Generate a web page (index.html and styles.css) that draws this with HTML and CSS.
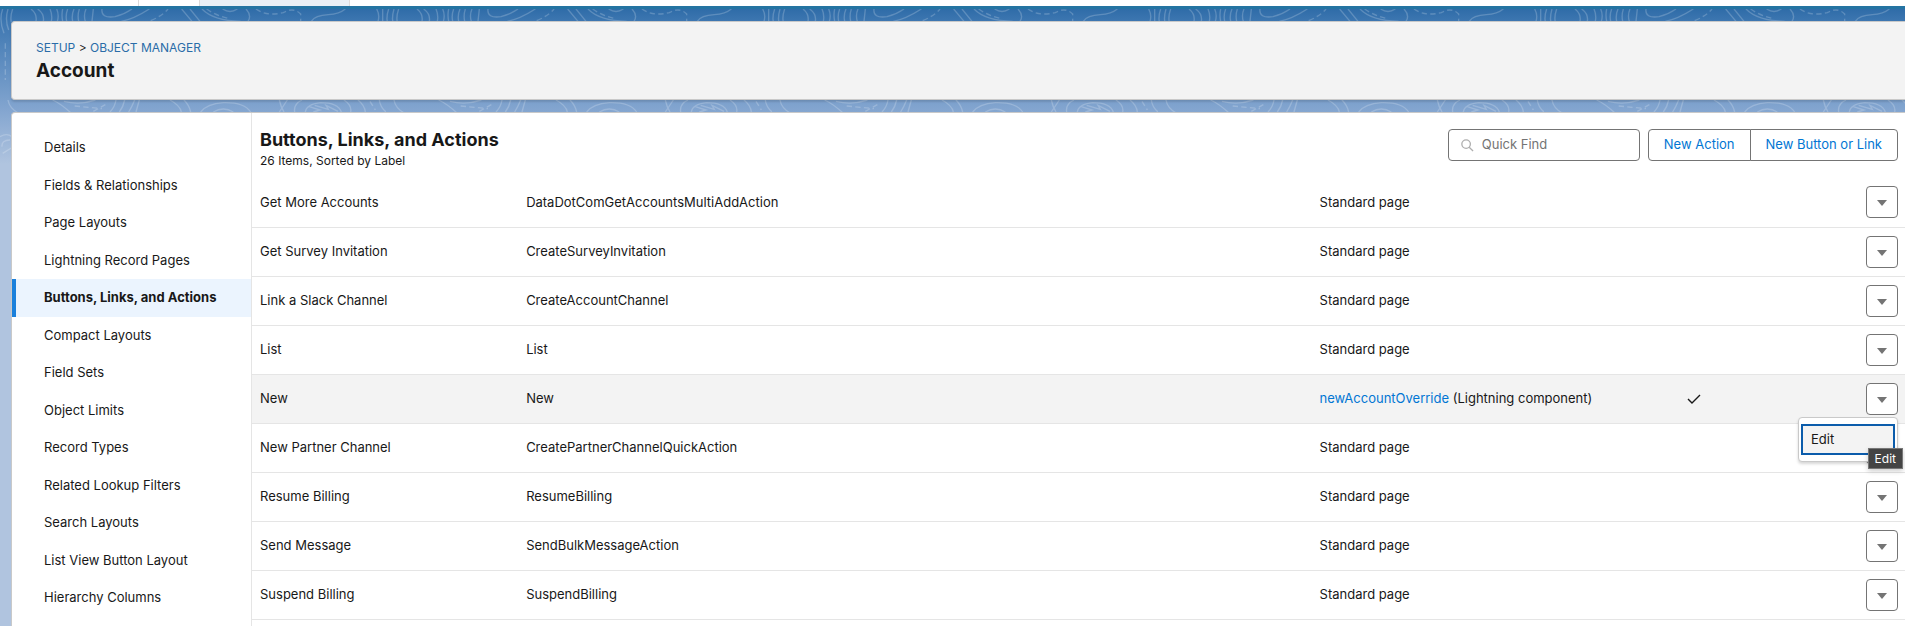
FILE: index.html
```html
<!DOCTYPE html>
<html lang="en">
<head>
  <meta charset="UTF-8" />
  <meta name="viewport" content="width=device-width, initial-scale=1.0"/>
  <title>Account | Object Manager</title>
  <link rel="stylesheet" href="styles.css">
</head>
<body>

  <!-- Tab bar -->
  <div class="tab-bar">
    <div class="tab-start"></div>
    <div class="tab-active"></div>
  </div>

  <div class="page">
    <header class="page-header">
      <div class="breadcrumb"><a href="#">SETUP</a> &gt; <a href="#">OBJECT MANAGER</a></div>
      <h1>Account</h1>
    </header>

    <div class="panel">
      <!-- Side menu -->
      <nav class="side-nav">
        <a href="#">Details</a>
        <a href="#">Fields &amp; Relationships</a>
        <a href="#">Page Layouts</a>
        <a href="#">Lightning Record Pages</a>
        <a href="#" class="active">Buttons, Links, and Actions</a>
        <a href="#">Compact Layouts</a>
        <a href="#">Field Sets</a>
        <a href="#">Object Limits</a>
        <a href="#">Record Types</a>
        <a href="#">Related Lookup Filters</a>
        <a href="#">Search Layouts</a>
        <a href="#">List View Button Layout</a>
        <a href="#">Hierarchy Columns</a>
      </nav>

      <main class="content">
        <div class="content-header">
          <div class="heading">
            <h2>Buttons, Links, and Actions</h2>
            <p>26 Items, Sorted by Label</p>
          </div>
          <div class="tools">
            <label class="search">
              <svg class="search-icon" viewBox="0 0 14 14"><circle cx="5.5" cy="5.5" r="4.6"/><path d="M8.8 8.8L13 13"/></svg>
              <input type="search" placeholder="Quick Find" aria-label="Quick Find">
            </label>
            <div class="btn-group">
              <button type="button" class="btn">New Action</button>
              <button type="button" class="btn">New Button or Link</button>
            </div>
          </div>
        </div>

        <table class="actions-table">
          <colgroup>
            <col class="col-label">
            <col class="col-name">
            <col class="col-content">
            <col class="col-check">
            <col class="col-menu">
          </colgroup>
          <tbody>
            <tr>
              <td>Get More Accounts</td>
              <td>DataDotComGetAccountsMultiAddAction</td>
              <td>Standard page</td>
              <td></td>
              <td><button type="button" class="menu-btn" aria-label="Show actions"><svg viewBox="0 0 10 6"><path d="M0 0H10L5 6Z"/></svg></button></td>
            </tr>
            <tr>
              <td>Get Survey Invitation</td>
              <td>CreateSurveyInvitation</td>
              <td>Standard page</td>
              <td></td>
              <td><button type="button" class="menu-btn" aria-label="Show actions"><svg viewBox="0 0 10 6"><path d="M0 0H10L5 6Z"/></svg></button></td>
            </tr>
            <tr>
              <td>Link a Slack Channel</td>
              <td>CreateAccountChannel</td>
              <td>Standard page</td>
              <td></td>
              <td><button type="button" class="menu-btn" aria-label="Show actions"><svg viewBox="0 0 10 6"><path d="M0 0H10L5 6Z"/></svg></button></td>
            </tr>
            <tr>
              <td>List</td>
              <td>List</td>
              <td>Standard page</td>
              <td></td>
              <td><button type="button" class="menu-btn" aria-label="Show actions"><svg viewBox="0 0 10 6"><path d="M0 0H10L5 6Z"/></svg></button></td>
            </tr>
            <tr class="current">
              <td>New</td>
              <td>New</td>
              <td><a href="#">newAccountOverride</a> (Lightning component)</td>
              <td><svg class="check" viewBox="0 0 14 10"><path d="M1 5L5 9L13 1"/></svg></td>
              <td>
                <div class="menu-wrap">
                  <button type="button" class="menu-btn" aria-label="Show actions"><svg viewBox="0 0 10 6"><path d="M0 0H10L5 6Z"/></svg></button>
                  <div class="dropdown">
                    <a href="#">Edit</a>
                    <span class="tooltip">Edit</span>
                  </div>
                </div>
              </td>
            </tr>
            <tr>
              <td>New Partner Channel</td>
              <td>CreatePartnerChannelQuickAction</td>
              <td>Standard page</td>
              <td></td>
              <td><button type="button" class="menu-btn" aria-label="Show actions"><svg viewBox="0 0 10 6"><path d="M0 0H10L5 6Z"/></svg></button></td>
            </tr>
            <tr>
              <td>Resume Billing</td>
              <td>ResumeBilling</td>
              <td>Standard page</td>
              <td></td>
              <td><button type="button" class="menu-btn" aria-label="Show actions"><svg viewBox="0 0 10 6"><path d="M0 0H10L5 6Z"/></svg></button></td>
            </tr>
            <tr>
              <td>Send Message</td>
              <td>SendBulkMessageAction</td>
              <td>Standard page</td>
              <td></td>
              <td><button type="button" class="menu-btn" aria-label="Show actions"><svg viewBox="0 0 10 6"><path d="M0 0H10L5 6Z"/></svg></button></td>
            </tr>
            <tr>
              <td>Suspend Billing</td>
              <td>SuspendBilling</td>
              <td>Standard page</td>
              <td></td>
              <td><button type="button" class="menu-btn" aria-label="Show actions"><svg viewBox="0 0 10 6"><path d="M0 0H10L5 6Z"/></svg></button></td>
            </tr>
          </tbody>
        </table>
      </main>
    </div>
  </div>

</body>
</html>
```
FILE: styles.css
```css
* {
  box-sizing: border-box;
}
body {
  margin: 0;
  height: 100vh;
  overflow: hidden;
  display: flex;
  flex-direction: column;
  font-family: Inter, "Liberation Sans", sans-serif;
  font-size: 13px;
  line-height: 1.5;
  color: #181818;
  background-color: #b0c4df;
}
a {
  color: #0176d3;
  text-decoration: none;
}
h1, h2, p {
  margin: 0;
}

/* Tab bar */
.tab-bar {
  display: flex;
  flex: none;
  height: 9px;
  background-color: #fff;
  border-bottom: 3px solid #2474a2;
}
.tab-start {
  width: 139px;
  margin-right: 60px;
  border-right: 1px solid #dddbda;
}
.tab-active {
  width: 151px;
  background-color: #e9f0f5;
  border-left: 1px solid #dddbda;
  border-right: 1px solid #dddbda;
}

/* Contour lines over the blue gradient */
.page {
  flex: 1;
  min-height: 0;
  display: flex;
  flex-direction: column;
  gap: 12px;
  padding: 12px 0 0 11px;
  background-image:
    url("data:image/svg+xml,%3Csvg xmlns='http://www.w3.org/2000/svg' width='386' height='151' viewBox='0 27 1158 453' fill='none' stroke='%23fff' stroke-opacity='.2' stroke-width='4'%3E%3Cpath d='M8 27Q-4 60 12 100M24 27Q14 60 26 90M38 27Q30 50 34 66M93 27Q112 42 108 64M113 27Q134 42 130 64M150 27Q158 45 154 64M170 27Q178 45 172 64M188 27Q184 45 188 64M203 27Q196 45 200 64M222 27Q214 45 218 64M238 27Q232 45 236 64M258 27Q250 45 256 64M280 27L276 64M306 27Q302 56 345 50Q372 44 396 27M364 64Q400 58 448 27M545 27L576 64M570 27L600 64M606 27Q640 62 722 64M668 27Q690 42 712 27M738 27Q756 46 744 64M934 64Q945 46 985 44Q1018 42 1036 27M1130 27Q1140 45 1134 64M1148 27V64'/%3E%3Cpath stroke-dasharray='16 10' d='M452 62Q490 46 504 27M620 27Q650 48 690 56M768 27Q800 50 850 38Q880 20 902 42V64M16 130V240'/%3E%3Cpath d='M24 300Q28 325 56 340M158 300Q184 312 214 340M192 304Q240 316 286 300M330 336Q345 320 348 300M358 336Q370 320 374 300M386 336Q396 320 404 300M408 336L418 300M510 300Q540 316 544 336M552 300Q568 316 572 336M602 336Q620 312 670 308Q732 306 752 336M640 336Q670 318 700 336M838 300Q842 320 852 336M862 300L838 336M884 336Q880 312 906 300M1032 300Q1056 316 1052 336M916 336Q920 312 962 308Q1014 308 1024 336M928 320L960 330L940 336M944 316L985 328L978 316L1014 334M1074 300Q1094 316 1096 336M1138 300Q1140 320 1158 336M0 410Q20 398 36 410M6 440Q4 420 30 420M8 460L34 444'/%3E%3Cpath stroke-dasharray='16 10' d='M224 318L306 326M280 334L316 314M1110 304L1126 330'/%3E%3C/svg%3E"),
    linear-gradient(#2f6ca8, #3f78b2 14px, #84a6d0 102px, #b0c4df 155px);
  background-repeat: repeat-x, no-repeat;
}
.page-header {
  flex: none;
  height: 79px;
  padding: 16px 24px;
  background-color: #f3f3f3;
  border: 1px solid #c9c9c9;
  border-right: 0;
  border-radius: 4px 0 0 4px;
  box-shadow: 0 2px 2px rgba(0,0,0,0.12);
}
.breadcrumb a {
  color: #2a6ca8;
}
.breadcrumb {
  font-size: 12px;
  line-height: 20px;
}
h1, h2 {
  font-size: 18px;
  font-weight: 700;
  line-height: 22px;
}
h1 {
  font-size: 19px;
  line-height: 26px;
}

.panel {
  flex: 1;
  min-height: 0;
  display: flex;
  background-color: #fff;
  border: 1px solid #c9c9c9;
  border-right: 0;
  border-bottom: 0;
  border-radius: 4px 0 0 0;
}

/* Side menu */
.side-nav {
  flex: none;
  width: 240px;
  padding-top: 16px;
  border-right: 1px solid #e5e5e5;
}
.side-nav a {
  display: block;
  padding: 9px 8px 9px 32px;
  color: #181818;
}
.side-nav a.active {
  font-weight: 700;
  background-color: #ebf4fe;
  box-shadow: inset 4px 0 0 #1b80db;
}

/* List header */
.content {
  flex: 1;
  min-width: 0;
}
.content-header {
  display: flex;
  justify-content: space-between;
  height: 65px;
  padding: 16px 7px 0 8px;
}
.heading p {
  font-size: 12px;
  line-height: 20px;
}
.tools {
  display: flex;
  gap: 8px;
}
.search {
  display: flex;
  align-items: center;
  gap: 8px;
  width: 192px;
  height: 32px;
  padding: 0 12px;
  border: 1px solid #747474;
  border-radius: 4px;
}
.search-icon {
  flex: none;
  width: 13px;
  height: 13px;
  fill: none;
  stroke: #aeaeae;
  stroke-width: 1.4;
}
.search input {
  width: 100%;
  padding: 0;
  border: 0;
  outline: 0;
  background: none;
  font: inherit;
}
.search input::placeholder {
  color: #747474;
}
.btn-group {
  display: flex;
  height: 32px;
}
.btn {
  padding: 0 15px;
  font: inherit;
  color: #0176d3;
  background-color: #fff;
  border: 1px solid #747474;
  cursor: pointer;
}
.btn:first-child {
  border-radius: 4px 0 0 4px;
}
.btn:last-child {
  margin-left: -1px;
  border-radius: 0 4px 4px 0;
}

/* Table */
.actions-table {
  width: 100%;
  table-layout: fixed;
  border-collapse: collapse;
}
.col-label {
  width: 16.1%;
}
.col-name {
  width: 48%;
}
.col-content {
  width: 22.2%;
}
.col-check {
  width: 8%;
}
.actions-table td {
  height: 49px;
  padding: 0 8px;
  border-bottom: 1px solid #e5e5e5;
}
.actions-table td:last-child {
  padding-right: 7px;
}
.actions-table .current {
  background-color: #f3f3f3;
}
.check {
  display: block;
  width: 14px;
  height: 10px;
  fill: none;
  stroke: #181818;
  stroke-width: 1.4;
}
.menu-btn {
  display: flex;
  align-items: center;
  justify-content: center;
  width: 32px;
  height: 32px;
  margin-left: auto;
  padding: 2px 0 0;
  background-color: #fff;
  border: 1px solid #747474;
  border-radius: 4px;
  cursor: pointer;
}
.menu-btn svg {
  width: 10px;
  height: 6px;
  fill: #747474;
}

/* Open row menu */
.menu-wrap {
  position: relative;
}
.dropdown {
  position: absolute;
  top: 34px;
  right: 0;
  z-index: 1;
  width: 100px;
  padding: 6px 2px;
  background-color: #fff;
  border: 1px solid #c9c9c9;
  border-radius: 4px;
  box-shadow: 0 2px 3px rgba(0,0,0,0.16);
}
.dropdown a {
  display: block;
  padding: 0 8px;
  line-height: 27px;
  color: #181818;
  background-color: #f3f3f3;
  border: 2px solid #0b5cab;
}
.tooltip {
  position: absolute;
  top: 30px;
  right: -6px;
  padding: 0 6px;
  font-size: 12px;
  line-height: 19px;
  color: #fff;
  background-color: #444;
  border: 1px solid #777;
  box-shadow: 0 2px 5px rgba(0,0,0,0.2);
}
```
